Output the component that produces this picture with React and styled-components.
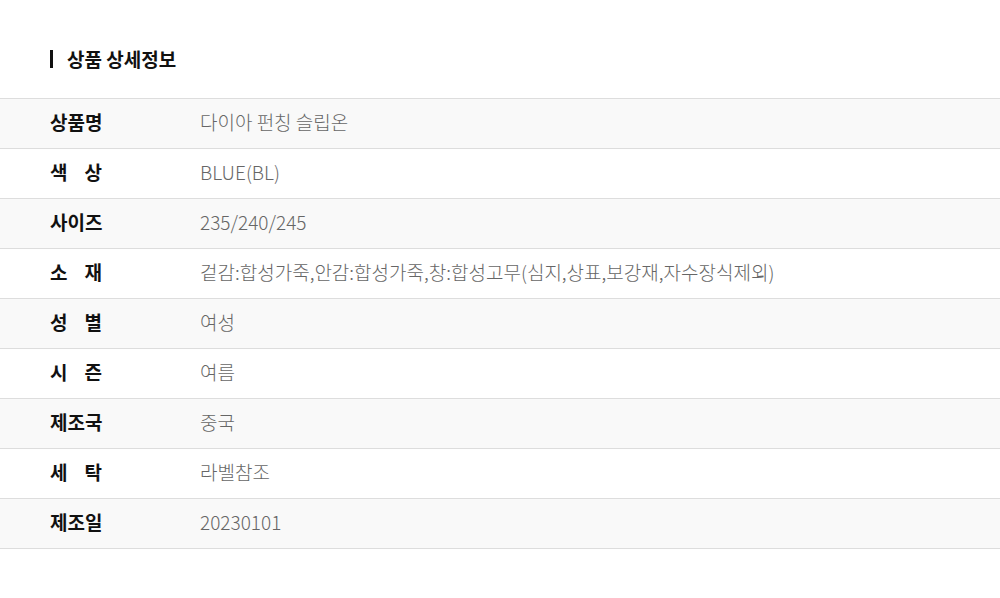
import React from 'react';
import styled, { createGlobalStyle } from 'styled-components';

const GlobalStyle = createGlobalStyle`
  body {
    margin: 0;
    background: #fff;
    font-family: "Noto Sans CJK KR", "Noto Sans", sans-serif;
  }
`;

const Section = styled.section`
  padding-top: 50px;
`;

const Title = styled.h2`
  margin: 0 0 30px 50px;
  padding-left: 14px;
  border-left: 3px solid #111;
  font-size: 19px;
  font-weight: 700;
  line-height: 18px;
  color: #111;
`;

const Table = styled.div`
  border-top: 1px solid #ddd;
`;

const Row = styled.div`
  display: flex;
  align-items: center;
  box-sizing: border-box;
  height: 50px;
  padding-bottom: 4px;
  border-bottom: 1px solid #ddd;
  background: ${(p) => (p.$shaded ? '#f9f9f9' : '#fff')};
  line-height: 1;
`;

const Label = styled.div`
  width: 52px;
  margin-left: 50px;
  margin-right: 98px;
  font-size: 19px;
  font-weight: 700;
  color: #111;
  text-align: justify;
  text-align-last: justify;
  white-space: nowrap;
`;

const Value = styled.div`
  font-size: 19px;
  font-weight: 300;
  color: #666;
`;

const rows = [
  ['상품명', '다이아 펀칭 슬립온'],
  ['색 상', 'BLUE(BL)'],
  ['사이즈', '235/240/245'],
  ['소 재', '겉감:합성가죽,안감:합성가죽,창:합성고무(심지,상표,보강재,자수장식제외)'],
  ['성 별', '여성'],
  ['시 즌', '여름'],
  ['제조국', '중국'],
  ['세 탁', '라벨참조'],
  ['제조일', '20230101'],
];

export default function App() {
  return (
    <>
      <GlobalStyle />
      <Section>
        <Title>상품 상세정보</Title>
        <Table>
          {rows.map(([label, value], i) => (
            <Row key={label} $shaded={i % 2 === 0}>
              <Label>{label}</Label>
              <Value>{value}</Value>
            </Row>
          ))}
        </Table>
      </Section>
    </>
  );
}
